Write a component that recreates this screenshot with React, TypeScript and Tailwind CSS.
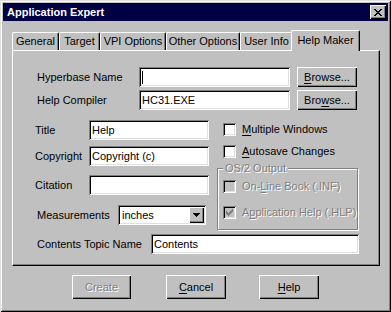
import type { ReactNode } from 'react';

const sunken =
  'bg-white shadow-[inset_1px_1px_0_#808080,inset_-1px_-1px_0_#ffffff,inset_2px_2px_0_#000000,inset_-2px_-2px_0_#dfdfdf]';
const raised =
  'bg-[#c0c0c0] shadow-[inset_1px_1px_0_#ffffff,inset_-1px_-1px_0_#000000,inset_-2px_-2px_0_#808080]';
const disabledText = 'text-[#808080] [text-shadow:1px_1px_0_#ffffff]';

const Field = ({ width, value, caret }: { width: string; value?: string; caret?: boolean }) => (
  <div className={`${sunken} ${width} h-[20px] flex items-center pl-[3px]`}>
    {caret && <span className="w-px h-[13px] bg-black" />}
    {value}
  </div>
);

const Button = ({ children, width, disabled }: { children: ReactNode; width: string; disabled?: boolean }) => (
  <div className={`${raised} ${width} flex items-center justify-center ${disabled ? disabledText : ''}`}>
    {children}
  </div>
);

const Checkbox = ({ label, checked, disabled }: { label: ReactNode; checked?: boolean; disabled?: boolean }) => (
  <div className="flex items-center h-[13px]">
    <div
      className={`w-[13px] h-[13px] flex items-center justify-center shadow-[inset_1px_1px_0_#808080,inset_-1px_-1px_0_#ffffff,inset_2px_2px_0_#000000,inset_-2px_-2px_0_#dfdfdf] ${
        disabled ? 'bg-[#c0c0c0]' : 'bg-white'
      }`}
    >
      {checked && (
        <svg width="7" height="7" viewBox="0 0 7 7" shapeRendering="crispEdges">
          <path d="M0 2h1v3H0zM1 3h1v3H1zM2 4h1v3H2zM3 3h1v3H3zM4 2h1v3H4zM5 1h1v3H5zM6 0h1v3H6z" fill="#808080" />
        </svg>
      )}
    </div>
    <span className={`ml-[6px] ${disabled ? disabledText : ''}`}>{label}</span>
  </div>
);

const tabs = [
  { name: 'General', w: 'w-[47px]' },
  { name: 'Target', w: 'w-[41px]' },
  { name: 'VPI Options', w: 'w-[66px]' },
  { name: 'Other Options', w: 'w-[74px]' },
  { name: 'User Info', w: 'w-[53px]' },
];

export default function App() {
  return (
    <div className="w-[391px] h-[312px] bg-[#c0c0c0] p-[3px] flex flex-col text-[11px] leading-none text-black font-['Liberation_Sans',Arial,sans-serif] shadow-[inset_1px_1px_0_#dfdfdf,inset_-1px_-1px_0_#000000,inset_2px_2px_0_#ffffff,inset_-2px_-2px_0_#808080]">
      {/* title bar */}
      <div className="h-[18px] bg-[#000042] flex items-center justify-between pl-[4px] pr-[2px]">
        <span className="text-white font-bold">Application Expert</span>
        <div className={`${raised} w-[16px] h-[14px] flex items-center justify-center`}>
          <svg width="8" height="7" viewBox="0 0 8 7" shapeRendering="crispEdges">
            <path d="M0 0h2v1h1v1h2V1h1V0h2v1H7v1H6v1H5v1h1v1h1v1h1v1H6V6H5V5H3v1H2v1H0V6h1V5h1V4h1V3H2V2H1V1H0z" fill="#000" />
          </svg>
        </div>
      </div>

      <div className="pl-[9px] pr-[8px]">
        {/* tabs */}
        <div className="mt-[9px] h-[20px] flex items-end">
          {tabs.map((t) => (
            <div
              key={t.name}
              className={`${t.w} h-[18px] flex items-center justify-center border-t border-l border-white border-r border-r-black rounded-t-[2px] shadow-[inset_-1px_0_0_#808080]`}
            >
              {t.name}
            </div>
          ))}
          <div className="relative z-10 -ml-[2px] -mb-[1px] w-[69px] h-[21px] pb-[2px] flex items-center justify-center bg-[#c0c0c0] border-t border-l border-white border-r border-r-black rounded-t-[2px] shadow-[inset_-1px_0_0_#808080]">
            Help Maker
          </div>
        </div>

        {/* panel */}
        <div className="h-[216px] border border-white border-r-black border-b-black shadow-[inset_-1px_-1px_0_#808080]">
          <div className="mt-[16px] pl-[24px] flex items-center">
            <span className="w-[102px]">Hyperbase Name</span>
            <Field width="w-[151px]" caret />
            <Button width="ml-[7px] w-[60px] h-[20px]">
              <span className="underline underline-offset-[2px]">B</span>rowse...
            </Button>
          </div>
          <div className="mt-[3px] pl-[24px] flex items-center">
            <span className="w-[102px]">Help Compiler</span>
            <Field width="w-[151px]" value="HC31.EXE" />
            <Button width="ml-[7px] w-[60px] h-[20px]">
              Bro<span className="underline underline-offset-[2px]">w</span>se...
            </Button>
          </div>

          <div className="mt-[10px] flex">
            <div className="w-[204px]">
              <div className="pl-[22px] flex items-center">
                <span className="w-[54px]">Title</span>
                <Field width="w-[120px]" value="Help" />
              </div>
              <div className="mt-[6px] pl-[22px] flex items-center">
                <span className="w-[54px]">Copyright</span>
                <Field width="w-[120px]" value="Copyright (c)" />
              </div>
              <div className="mt-[9px] pl-[22px] flex items-center">
                <span className="w-[54px]">Citation</span>
                <Field width="w-[120px]" />
              </div>
              <div className="mt-[10px] pl-[24px] flex items-center">
                <span className="w-[81px]">Measurements</span>
                <div className={`${sunken} w-[88px] h-[20px] flex items-center justify-between pl-[4px] pr-[2px]`}>
                  inches
                  <div className={`${raised} w-[15px] h-[16px] flex items-center justify-center`}>
                    <svg width="7" height="4" viewBox="0 0 7 4" shapeRendering="crispEdges">
                      <path d="M0 0h7v1H6v1H5v1H4v1H3V3H2V2H1V1H0z" fill="#000" />
                    </svg>
                  </div>
                </div>
              </div>
            </div>

            <div className="w-[141px]">
              <div className="mt-[3px] pl-[6px]">
                <Checkbox label={<><span className="underline underline-offset-[2px]">M</span>ultiple Windows</>} />
              </div>
              <div className="mt-[9px] pl-[6px]">
                <Checkbox label={<><span className="underline underline-offset-[2px]">A</span>utosave Changes</>} />
              </div>
              <div className="relative mt-[10px] h-[62px] border border-[#808080] shadow-[1px_1px_0_#ffffff,inset_1px_1px_0_#ffffff] pl-[5px] pt-[11px]">
                <span className={`absolute -top-[6px] left-[5px] px-[2px] bg-[#c0c0c0] ${disabledText}`}>OS/2 Output</span>
                <Checkbox disabled label={<>On-<span className="underline underline-offset-[2px]">L</span>ine Book (.INF)</>} />
                <div className="mt-[13px]">
                  <Checkbox disabled checked label={<>A<span className="underline underline-offset-[2px]">p</span>plication Help (.HLP)</>} />
                </div>
              </div>
            </div>
          </div>

          <div className="mt-[4px] pl-[24px] flex items-center">
            <span className="w-[114px]">Contents Topic Name</span>
            <Field width="w-[208px]" value="Contents" />
          </div>
        </div>
      </div>

      {/* buttons */}
      <div className="mt-[9px] pl-[69px] flex">
        <Button width="w-[59px] h-[24px]" disabled>Create</Button>
        <Button width="ml-[35px] w-[60px] h-[24px]">
          <span className="underline underline-offset-[2px]">C</span>ancel
        </Button>
        <Button width="ml-[33px] w-[60px] h-[24px]">
          <span className="underline underline-offset-[2px]">H</span>elp
        </Button>
      </div>
    </div>
  );
}
